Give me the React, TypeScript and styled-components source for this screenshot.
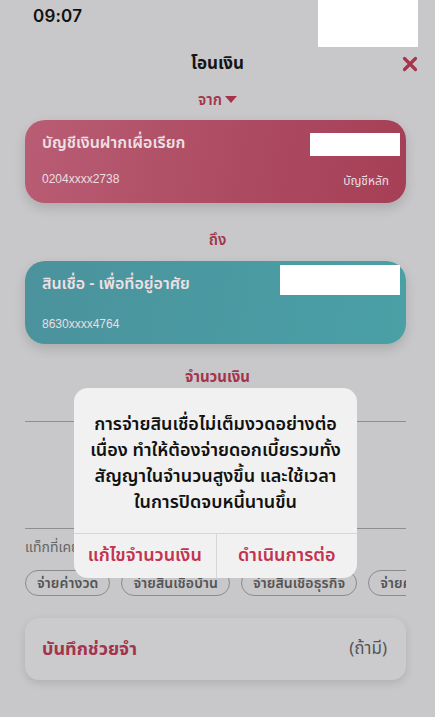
import React from "react";
import styled, { createGlobalStyle } from "styled-components";

const GlobalStyle = createGlobalStyle`
  html, body {
    margin: 0;
    padding: 0;
    background: #c8c8ca;
  }
  body {
    font-family: "Noto Sans Thai", "Noto Sans", "Liberation Sans", sans-serif;
    width: 435px;
    height: 717px;
    overflow: hidden;
  }
`;

const tags = ["จ่ายค่างวด", "จ่ายสินเชื่อบ้าน", "จ่ายสินเชื่อธุรกิจ", "จ่ายค่าบ้าน"];

const App = () => {
  return (
    <Screen>
      <GlobalStyle />
      <StatusBar>
        <Clock>09:07</Clock>
        <Redacted $w={100} $h={47} />
      </StatusBar>

      <Header>
        <Title>โอนเงิน</Title>
        <CloseIcon viewBox="0 0 16 16">
          <path d="M2.5 2.5 L13.5 13.5 M13.5 2.5 L2.5 13.5" stroke="#a8344b" strokeWidth="3.2" strokeLinecap="round" />
        </CloseIcon>
      </Header>

      <Label>
        จาก
        <svg width="12" height="8" viewBox="0 0 12 8">
          <path d="M0 0 H12 L6 7 Z" fill="#a3344b" />
        </svg>
      </Label>

      <AccountCard $variant="from" $gap={9}>
        <CardTop>
          <CardName>บัญชีเงินฝากเผื่อเรียก</CardName>
          <Redacted $w={90} $h={23} $up={-2} />
        </CardTop>
        <CardBottom>
          <span>0204xxxx2738</span>
          <Plain>บัญชีหลัก</Plain>
        </CardBottom>
      </AccountCard>

      <Label $gap={26}>ถึง</Label>

      <AccountCard $variant="to" $gap={10}>
        <CardTop>
          <CardName>สินเชื่อ - เพื่อที่อยู่อาศัย</CardName>
          <Redacted $w={120} $h={30} $up={7} />
        </CardTop>
        <CardBottom>
          <span>8630xxxx4764</span>
        </CardBottom>
      </AccountCard>

      <Label $gap={22} $bold>จำนวนเงิน</Label>

      <AmountArea>
        <Divider />
        <Spacer />
        <Divider />
      </AmountArea>

      <TagCaption>แท็กที่เคยใช้</TagCaption>
      <TagRow>
        {tags.map((t) => (
          <Tag key={t}>{t}</Tag>
        ))}
      </TagRow>

      <MemoCard>
        <MemoTitle>บันทึกช่วยจำ</MemoTitle>
        <MemoHint>(ถ้ามี)</MemoHint>
      </MemoCard>

      <Dialog>
        <DialogText>
          การจ่ายสินเชื่อไม่เต็มงวดอย่างต่อ
          <br />
          เนื่อง ทำให้ต้องจ่ายดอกเบี้ยรวมทั้ง
          <br />
          สัญญาในจำนวนสูงขึ้น และใช้เวลา
          <br />
          ในการปิดจบหนี้นานขึ้น
        </DialogText>
        <DialogActions>
          <DialogButton>แก้ไขจำนวนเงิน</DialogButton>
          <DialogButton>ดำเนินการต่อ</DialogButton>
        </DialogActions>
      </Dialog>
    </Screen>
  );
};

const Screen = styled.div`
  position: relative;
  width: 435px;
  height: 717px;
  display: flex;
  flex-direction: column;
  overflow: hidden;
`;

const StatusBar = styled.div`
  height: 47px;
  display: flex;
  justify-content: space-between;
  align-items: flex-start;
  padding: 0 17px 0 33px;
`;

const Clock = styled.div`
  font-family: "Inter", "Liberation Sans", sans-serif;
  font-size: 17px;
  font-weight: 600;
  color: #111;
  padding-top: 6px;
  letter-spacing: 0.2px;
`;

const Redacted = styled.div<{ $w: number; $h: number; $up?: number }>`
  width: ${(p) => p.$w}px;
  height: ${(p) => p.$h}px;
  background: #ffffff;
  flex-shrink: 0;
  margin-top: ${(p) => (p.$up ? -p.$up : 0)}px;
`;

const Header = styled.div`
  position: relative;
  height: 34px;
  display: flex;
  align-items: center;
  justify-content: center;
`;

const Title = styled.div`
  font-size: 17px;
  font-weight: 700;
  color: #151515;
`;

const CloseIcon = styled.svg`
  position: absolute;
  right: 17px;
  top: 9px;
  width: 16px;
  height: 16px;
`;

const Label = styled.div<{ $gap?: number; $bold?: boolean }>`
  margin-top: ${(p) => p.$gap ?? 8}px;
  height: 22px;
  display: flex;
  align-items: center;
  justify-content: center;
  gap: 3px;
  font-size: 15px;
  font-weight: ${(p) => (p.$bold ? 700 : 600)};
  color: #a3344b;
`;

const AccountCard = styled.div<{ $variant: "from" | "to"; $gap: number }>`
  margin: ${(p) => p.$gap}px 29px 0 25px;
  height: 83px;
  box-sizing: border-box;
  border-radius: 20px;
  padding: 11px 6px 13px 17px;
  display: flex;
  flex-direction: column;
  justify-content: space-between;
  background: ${(p) =>
    p.$variant === "from"
      ? "linear-gradient(100deg, #b95d74 0%, #ad4b62 55%, #a53f56 100%)"
      : "linear-gradient(100deg, #4b929c 0%, #4a9aa2 55%, #4aa0a6 100%)"};
  box-shadow: 0 5px 12px rgba(0, 0, 0, 0.14);
`;

const CardTop = styled.div`
  display: flex;
  justify-content: space-between;
  align-items: flex-start;
`;

const CardName = styled.div`
  font-size: 16px;
  font-weight: 600;
  color: #eee0e4;
`;

const CardBottom = styled.div`
  display: flex;
  justify-content: space-between;
  padding-right: 11px;
  font-family: "Liberation Sans", sans-serif;
  font-size: 12px;
  color: #eadde1;
`;

const Plain = styled.span`
  font-family: "Noto Sans Thai", sans-serif;
  font-size: 12px;
`;

const AmountArea = styled.div`
  margin: 33px 29px 0 25px;
  display: flex;
  flex-direction: column;
`;

const Divider = styled.div`
  height: 1px;
  background: #8e8e90;
`;

const Spacer = styled.div`
  height: 106px;
`;

const TagCaption = styled.div`
  margin: 9px 0 0 25px;
  font-size: 14px;
  color: #666;
  height: 20px;
  line-height: 20px;
`;

const TagRow = styled.div`
  margin: 12px 29px 0 25px;
  display: flex;
  gap: 11px;
  overflow: hidden;
  white-space: nowrap;
`;

const Tag = styled.div`
  flex-shrink: 0;
  height: 26px;
  box-sizing: border-box;
  padding: 0 11px;
  border: 1px solid #8b8b8d;
  border-radius: 14px;
  display: flex;
  align-items: center;
  font-size: 14px;
  font-weight: 600;
  letter-spacing: 0.1px;
  color: #555;
`;

const MemoCard = styled.div`
  margin: 22px 29px 0 25px;
  height: 62px;
  border-radius: 14px;
  background: #cbcbcd;
  box-shadow: 0 3px 8px rgba(0, 0, 0, 0.12);
  display: flex;
  align-items: center;
  justify-content: space-between;
  padding: 0 19px 0 17px;
`;

const MemoTitle = styled.div`
  font-size: 18px;
  font-weight: 700;
  color: #a3344b;
`;

const MemoHint = styled.div`
  font-size: 17px;
  color: #555;
`;

const Dialog = styled.div`
  position: absolute;
  left: 74px;
  top: 388px;
  width: 283px;
  height: 190px;
  border-radius: 14px;
  background: #f1f1f1;
  display: flex;
  flex-direction: column;
  overflow: hidden;
`;

const DialogText = styled.div`
  flex: 1;
  padding-top: 24px;
  text-align: center;
  font-size: 18px;
  font-weight: 600;
  line-height: 26px;
  color: #111;
`;

const DialogActions = styled.div`
  height: 44px;
  display: grid;
  grid-template-columns: 1fr 1fr;
  border-top: 1px solid #d6d6d6;

  & > * + * {
    border-left: 1px solid #d6d6d6;
  }
`;

const DialogButton = styled.div`
  display: flex;
  align-items: center;
  justify-content: center;
  padding-bottom: 2px;
  font-size: 18px;
  font-weight: 600;
  color: #c3334f;
`;

export default App;
